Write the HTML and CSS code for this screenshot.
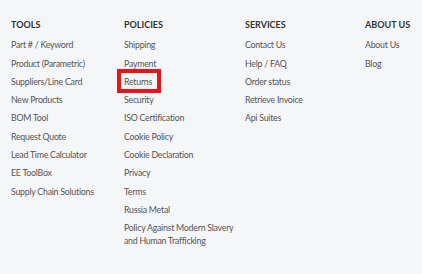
FILE: index.html
```
<!DOCTYPE html>
<html lang="en">
<head>
    <meta charset="UTF-8">
    <meta name="viewport" content="width=device-width, initial-scale=1.0">
    <title>Footer Links</title>
    <link rel="stylesheet" href="styles.css">
</head>
<body>
    <div class="footer">
        <div class="col col-tools">
            <h4>TOOLS</h4>
            <ul>
                <li><a href="#">Part # / Keyword</a></li>
                <li><a href="#">Product (Parametric)</a></li>
                <li><a href="#">Suppliers/Line Card</a></li>
                <li><a href="#">New Products</a></li>
                <li><a href="#">BOM Tool</a></li>
                <li><a href="#">Request Quote</a></li>
                <li><a href="#">Lead Time Calculator</a></li>
                <li><a href="#">EE ToolBox</a></li>
                <li><a href="#">Supply Chain Solutions</a></li>
            </ul>
        </div>
        <div class="col col-policies">
            <h4>POLICIES</h4>
            <ul>
                <li><a href="#">Shipping</a></li>
                <li><a href="#">Payment</a></li>
                <li><a href="#" class="marked">Returns</a></li>
                <li><a href="#">Security</a></li>
                <li><a href="#">ISO Certification</a></li>
                <li><a href="#">Cookie Policy</a></li>
                <li><a href="#">Cookie Declaration</a></li>
                <li><a href="#">Privacy</a></li>
                <li><a href="#">Terms</a></li>
                <li><a href="#">Russia Metal</a></li>
                <li><a href="#">Policy Against Modern Slavery and Human Trafficking</a></li>
            </ul>
        </div>
        <div class="col col-services">
            <h4>SERVICES</h4>
            <ul>
                <li><a href="#">Contact Us</a></li>
                <li><a href="#">Help / FAQ</a></li>
                <li><a href="#">Order status</a></li>
                <li><a href="#">Retrieve Invoice</a></li>
                <li><a href="#">Api Suites</a></li>
            </ul>
        </div>
        <div class="col col-about">
            <h4>ABOUT US</h4>
            <ul>
                <li><a href="#">About Us</a></li>
                <li><a href="#">Blog</a></li>
            </ul>
        </div>
    </div>
</body>
</html>
```

FILE: styles.css
```
body {
    margin: 0;
    background-color: #f5f6f8;
    font-family: Lato, "Liberation Sans", sans-serif;
}
.footer {
    display: grid;
    grid-template-columns: 113px 121px 120px auto;
    padding: 18.5px 0 0 11px;
}
.col h4 {
    margin: 0 0 7.75px 0;
    font-size: 9px;
    line-height: 12px;
    font-weight: bold;
    color: #333333;
}
.col ul {
    list-style: none;
    margin: 0;
    padding: 0;
    display: flex;
    flex-direction: column;
    gap: 5.3px;
}
.col li {
    font-size: 8.8px;
    line-height: 13px;
    letter-spacing: -0.25px;
    padding-right: 6px;
}
.col a {
    color: #555555;
    text-decoration: none;
}
.marked {
    display: inline-block;
    border: 4px solid #e8141c;
    padding: 1.5px 5px 1.5px 3px;
    margin: -5.5px 0 -5.5px -7px;
}
```
